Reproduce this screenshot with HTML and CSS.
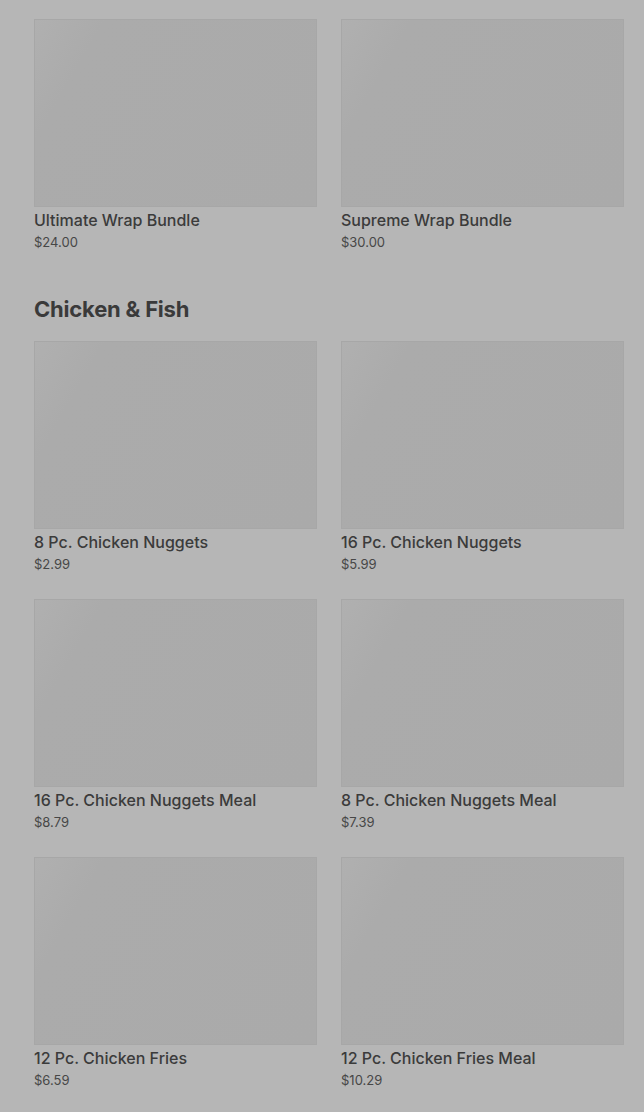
FILE: index.html
```html
<!DOCTYPE html>
<html lang="en">
  <head>
    <meta charset="UTF-8" />
    <meta name="viewport" content="width=device-width, initial-scale=1.0" />
    <title>Menu</title>
    <link rel="stylesheet" href="styles.css">
  </head>
  <body>
    <main class="menu">
      <section class="menu-section">
        <div class="item-grid">
          <div class="item">
            <div class="item-img"></div>
            <p class="item-name">Ultimate Wrap Bundle</p>
            <p class="item-price">$24.00</p>
          </div>
          <div class="item">
            <div class="item-img"></div>
            <p class="item-name">Supreme Wrap Bundle</p>
            <p class="item-price">$30.00</p>
          </div>
        </div>
      </section>
      <section class="menu-section">
        <h2 class="section-title">Chicken &amp; Fish</h2>
        <div class="item-grid">
          <div class="item">
            <div class="item-img"></div>
            <p class="item-name">8 Pc. Chicken Nuggets</p>
            <p class="item-price">$2.99</p>
          </div>
          <div class="item">
            <div class="item-img"></div>
            <p class="item-name">16 Pc. Chicken Nuggets</p>
            <p class="item-price">$5.99</p>
          </div>
          <div class="item">
            <div class="item-img"></div>
            <p class="item-name">16 Pc. Chicken Nuggets Meal</p>
            <p class="item-price">$8.79</p>
          </div>
          <div class="item">
            <div class="item-img"></div>
            <p class="item-name">8 Pc. Chicken Nuggets Meal</p>
            <p class="item-price">$7.39</p>
          </div>
          <div class="item">
            <div class="item-img"></div>
            <p class="item-name">12 Pc. Chicken Fries</p>
            <p class="item-price">$6.59</p>
          </div>
          <div class="item">
            <div class="item-img"></div>
            <p class="item-name">12 Pc. Chicken Fries Meal</p>
            <p class="item-price">$10.29</p>
          </div>
        </div>
      </section>
    </main>
  </body>
</html>
```

FILE: styles.css
```css
body {
  margin: 0;
  background-color: #b6b6b6;
  font-family: "Inter", "Roboto", sans-serif;
  color: #3b3b3b;
}
.menu {
  padding: 19px 20px 0 34px;
}
.menu-section {
  margin-bottom: 42px;
}
.section-title {
  margin: 0 0 18px;
  font-size: 22px;
  line-height: 28px;
  font-weight: 700;
  letter-spacing: -0.2px;
  color: #3a3a3a;
}
.item-grid {
  display: grid;
  grid-template-columns: 1fr 1fr;
  column-gap: 24px;
  row-gap: 24px;
}
.item-img {
  height: 186px;
  border: 1px solid #a7a7a7;
  background: linear-gradient(120deg, #b0b0b0 0%, #ababab 18%, #aaaaaa 100%);
}
.item-name {
  margin: 2px 0 0;
  font-size: 16px;
  line-height: 22px;
  font-weight: 500;
  color: #3b3b3b;
}
.item-price {
  margin: 1px 0 0;
  font-size: 13px;
  line-height: 21px;
  color: #474747;
}
```
